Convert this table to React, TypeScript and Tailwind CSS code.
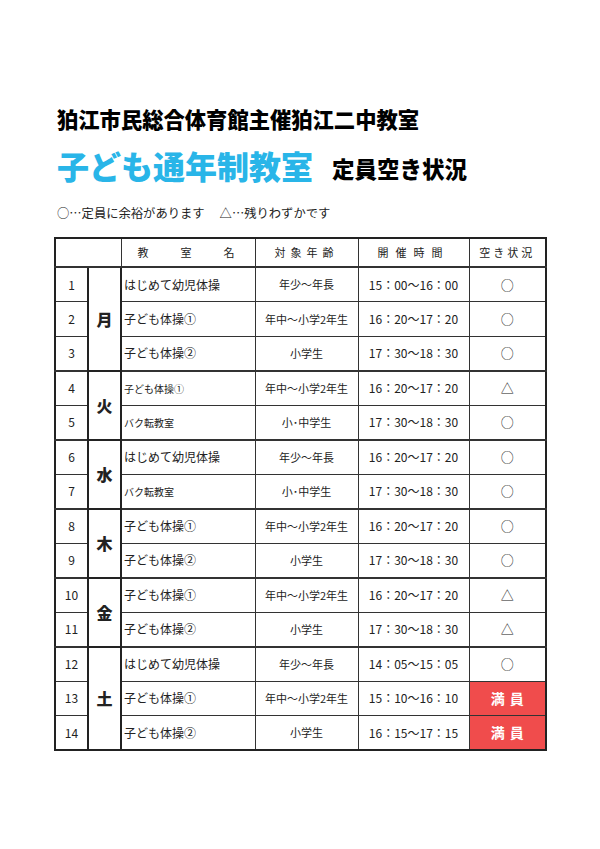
const rows = [
  { no: 1, name: 'はじめて幼児体操', age: '年少～年長', time: '15：00～16：00', st: '○' },
  { no: 2, name: '子ども体操①', age: '年中～小学2年生', time: '16：20～17：20', st: '○' },
  { no: 3, name: '子ども体操②', age: '小学生', time: '17：30～18：30', st: '○' },
  { no: 4, name: '子ども体操①', age: '年中～小学2年生', time: '16：20～17：20', st: '△', small: true },
  { no: 5, name: 'バク転教室', age: '小･中学生', time: '17：30～18：30', st: '○', small: true },
  { no: 6, name: 'はじめて幼児体操', age: '年少～年長', time: '16：20～17：20', st: '○' },
  { no: 7, name: 'バク転教室', age: '小･中学生', time: '17：30～18：30', st: '○', small: true },
  { no: 8, name: '子ども体操①', age: '年中～小学2年生', time: '16：20～17：20', st: '○' },
  { no: 9, name: '子ども体操②', age: '小学生', time: '17：30～18：30', st: '○' },
  { no: 10, name: '子ども体操①', age: '年中～小学2年生', time: '16：20～17：20', st: '△' },
  { no: 11, name: '子ども体操②', age: '小学生', time: '17：30～18：30', st: '△' },
  { no: 12, name: 'はじめて幼児体操', age: '年少～年長', time: '14：05～15：05', st: '○' },
  { no: 13, name: '子ども体操①', age: '年中～小学2年生', time: '15：10～16：10', st: 'full' },
  { no: 14, name: '子ども体操②', age: '小学生', time: '16：15～17：15', st: 'full' },
];

// day label starts at these row numbers, with the number of rows it spans
const days: Record<number, [string, number]> = {
  1: ['月', 3],
  4: ['火', 2],
  6: ['水', 2],
  8: ['木', 2],
  10: ['金', 2],
  12: ['土', 3],
};

export default function App() {
  return (
    <div
      className="w-[600px] h-[849px] bg-white text-black"
      style={{ fontFamily: '"Noto Sans CJK JP", "Noto Sans", sans-serif' }}
    >
      <div className="pt-[105px] pl-[57px]">
        <h1 className="text-[21.3px] leading-[28px] font-black">
          狛江市民総合体育館主催狛江二中教室
        </h1>
        <div className="flex items-end mt-[12px]">
          <h2 className="text-[32px] leading-[40px] font-black text-[#29b5e8]">子ども通年制教室</h2>
          <span className="ml-[19px] mb-[2px] text-[22.5px] leading-[30px] font-black">定員空き状況</span>
        </div>
        <p className="mt-[20px] text-[12.3px] leading-[16px] text-[#222]">
          ○…定員に余裕があります　 △…残りわずかです
        </p>
      </div>

      <table className="ml-[54px] mt-[16px] border-collapse border-2 border-[#222] text-[#222] w-[491px] table-fixed">
        <colgroup>
          <col className="w-[33px]" />
          <col className="w-[33px]" />
          <col className="w-[134px]" />
          <col className="w-[103px]" />
          <col className="w-[111px]" />
          <col className="w-[77px]" />
        </colgroup>
        <thead>
          <tr className="h-[29px] text-[11px]">
            <th colSpan={2} className="border border-[#333] border-b-2 font-normal"></th>
            <th className="border border-[#333] border-b-2 font-normal">
              <div className="flex justify-between pl-[16px] pr-[20px]">
                <span>教</span>
                <span>室</span>
                <span>名</span>
              </div>
            </th>
            <th className="border border-[#333] border-b-2 font-normal tracking-[5px]">対象年齢</th>
            <th className="border border-[#333] border-b-2 font-normal tracking-[7px]">開催時間</th>
            <th className="border border-[#333] border-b-2 font-normal tracking-[3px]">空き状況</th>
          </tr>
        </thead>
        <tbody>
          {rows.map((r) => {
            const day = days[r.no];
            const top = day ? 'border-t-2' : '';
            return (
              <tr key={r.no} className="h-[34.5px]">
                <td className={`border border-[#333] ${top} text-center text-[12px]`}>{r.no}</td>
                {day && (
                  <td
                    rowSpan={day[1]}
                    className="border-2 border-[#222] text-center text-[16px] font-black"
                  >
                    {day[0]}
                  </td>
                )}
                <td
                  className={`border border-[#333] ${top} pl-[2px] ${
                    r.small ? 'text-[10px]' : 'text-[12px]'
                  }`}
                >
                  {r.name}
                </td>
                <td className={`border border-[#333] ${top} text-center text-[11px]`}>{r.age}</td>
                <td className={`border border-[#333] ${top} text-center text-[12px]`}>{r.time}</td>
                {r.st === 'full' ? (
                  <td className={`border border-[#333] ${top} bg-[#f04c4c] text-center text-white font-bold text-[14px] tracking-[5px] pl-[5px]`}>
                    満員
                  </td>
                ) : (
                  <td className={`border border-[#333] ${top} text-center text-[13px]`}>{r.st}</td>
                )}
              </tr>
            );
          })}
        </tbody>
      </table>
    </div>
  );
}
